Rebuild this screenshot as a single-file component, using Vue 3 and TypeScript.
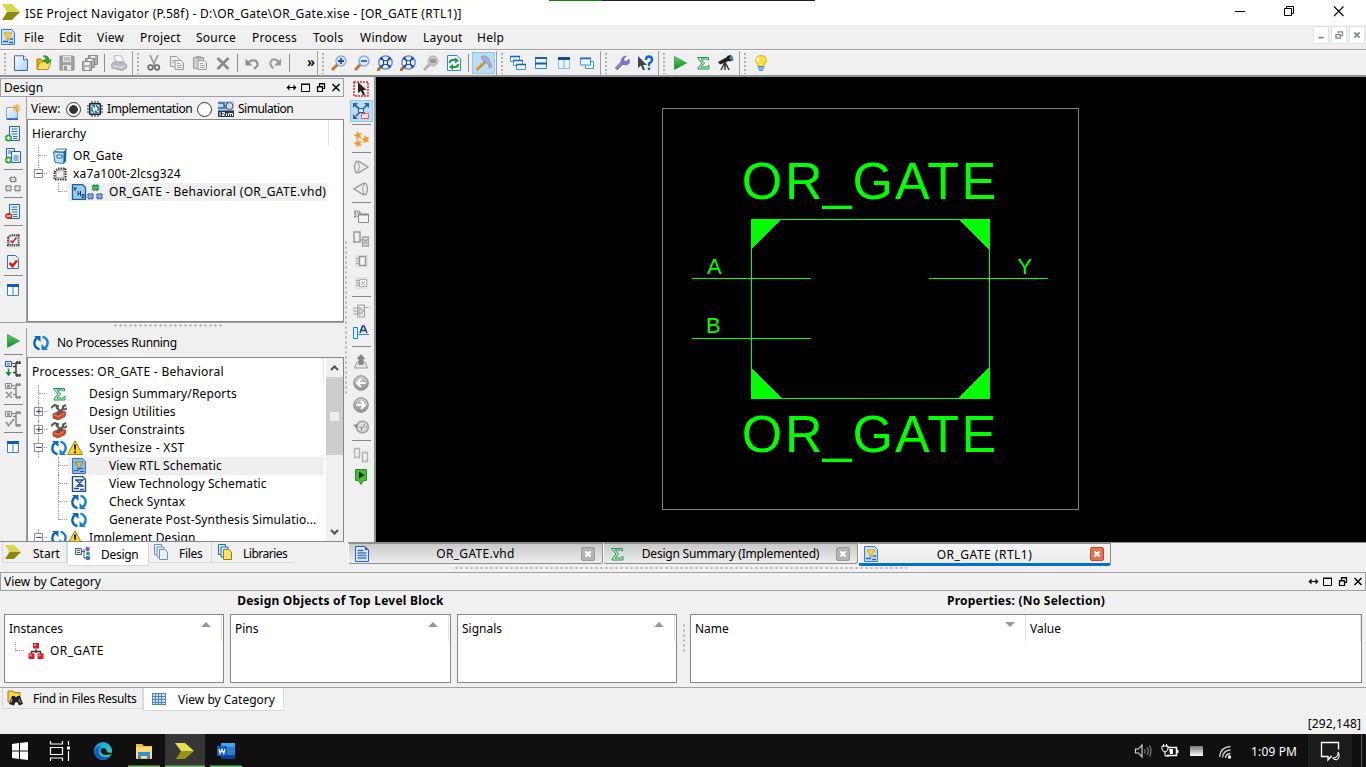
<script setup lang="ts">
interface Tool { icon: string; sep?: boolean; active?: boolean }
interface Row { icon: string; icon2?: string; label: string; level: number; box?: string; selected?: boolean; wide?: boolean }

const menus: string[] = ['File', 'Edit', 'View', 'Project', 'Source', 'Process', 'Tools', 'Window', 'Layout', 'Help']

const t = (names: string): Tool[] =>
  names.split(' ').map((n) => (n === '|' ? { icon: '', sep: true } : { icon: n.replace('*', ''), active: n.startsWith('*') }))

const toolGroups: { id: string; items: Tool[] }[] = [
  { id: 'g1', items: t('new open save saveall | print') },
  { id: 'g2', items: t('cut copy paste delete | undo redo |') },
  { id: 'g3', items: t('zoomin zoomout zoomfit zoomfit zoomoff refresh | *hammer') },
  { id: 'g4', items: t('cascade tileh tilev float') },
  { id: 'g5', items: t('wrench whats') },
  { id: 'g6', items: t('play sigma scope') },
  { id: 'g7', items: t('bulb') },
]
const designTools = t('newsrc addsrc addcopy | modules | removesrc | chipcheck doccheck | layout')
const processTools = t('play | run1 run2 | run3 | layout')
const schematicTools = t('select *zoombox | stars | coneout conein | blk1 blk2 blk3 blk4 | gate netname | up back fwd hist | pair marker')

const rows: Row[] = [
  { icon: 'sigma', label: 'Design Summary/Reports', level: 0 },
  { icon: 'tools', label: 'Design Utilities', level: 0, box: '+' },
  { icon: 'tools', label: 'User Constraints', level: 0, box: '+' },
  { icon: 'cycle', icon2: 'warn', label: 'Synthesize - XST', level: 0, box: '-', wide: true },
  { icon: 'rtl', label: 'View RTL Schematic', level: 1, selected: true },
  { icon: 'tech', label: 'View Technology Schematic', level: 1 },
  { icon: 'cycle', label: 'Check Syntax', level: 1 },
  { icon: 'cycle', label: 'Generate Post-Synthesis Simulatio...', level: 1 },
  { icon: 'cycle', icon2: 'warn', label: 'Implement Design', level: 0, box: '-' },
]
</script>

<template>
  <div class="app">
    <svg width="0" height="0" class="sprite">
      <defs>
        <linearGradient id="gb" x1="0" y1="0" x2="1" y2="1"><stop offset="0" stop-color="#fff" /><stop offset="1" stop-color="#a9cdf5" /></linearGradient>
        <linearGradient id="gg" x1="0" y1="0" x2="0" y2="1"><stop offset="0" stop-color="#58d06a" /><stop offset="1" stop-color="#0a8a20" /></linearGradient>
        <linearGradient id="ge" x1="0" y1="0" x2="1" y2="1"><stop offset="0" stop-color="#1b8fe0" /><stop offset=".5" stop-color="#27b8d8" /><stop offset="1" stop-color="#5fd66b" /></linearGradient>
        <linearGradient id="gk" x1="0" y1="0" x2="0" y2="1"><stop offset="0" stop-color="#777" /><stop offset="1" stop-color="#fff" /></linearGradient>
        <linearGradient id="gc" x1="0" y1="0" x2="0" y2="1"><stop offset="0" stop-color="#d0d0d0" /><stop offset="1" stop-color="#8f8f8f" /></linearGradient>
      </defs>
      <symbol id="i-ise" viewBox="0 0 18 16"><path d="M0 0h10l8 8H5z" fill="#d5d84c" /><path d="M5 8h13l-8 8H0z" fill="#8b8a0c" /></symbol>
      <symbol id="i-new" viewBox="0 0 16 16"><path d="M1.500 .8h9l4 4v10.700h-13z" fill="url(#gb)" stroke="#3c66b8" /><path d="M10.500.800v4h4" fill="#fff" stroke="#3c66b8" /></symbol>
      <symbol id="i-open" viewBox="0 0 16 16"><path d="M1 14V4h4l1 1.500h5V14z" fill="#e8b420" stroke="#b07c10" /><path d="M1 14.500L4 7h11l-3 7.500z" fill="#ffdf62" stroke="#c08d18" /><path d="M7 1c4-1 6 1 6 4h2.500l-4 4-4-4H10c0-2-1-3-3-4z" fill="#25a834" stroke="#0b7820" stroke-width=".6" /></symbol>
      <symbol id="i-save" viewBox="0 0 16 16"><path d="M1 1h13l1 1v13H1z" fill="#a2a2a2" stroke="#8a8a8a" /><path d="M4 1h8v6H4zM4 10h8v5H4z" fill="#e6e6e6" /><path d="M5 3h6M5 5h6" stroke="#999" /><path d="M5 11h3v4H5z" fill="#999" /></symbol>
      <symbol id="i-saveall" viewBox="0 0 16 16"><g stroke="#8a8a8a" fill="#b2b2b2"><path d="M6.500.5h9v9h-9z" /><path d="M3.500 3.500h9v9h-9z" /><path d="M.5 6.500h9v9h-9z" /></g><path d="M2.500 7h5v3h-5zM3 12h4v3H3zM6 4h4v2H6zM9 1h4v2H9z" fill="#eee" /></symbol>
      <symbol id="i-print" viewBox="0 0 16 16"><path d="M3 1l6-1 4 6-8 2z" fill="#f6f6f6" stroke="#aaa" stroke-width=".8" /><path d="M.5 9L4 6.500l9 1 2.500 2V13L11 15.500 1 13z" fill="#b9bcc4" stroke="#989aa2" stroke-width=".8" /><path d="M2 11l9 1.500 3-2" stroke="#e9e9ef" fill="none" /></symbol>
      <symbol id="i-cut" viewBox="0 0 16 16"><path d="M4 0l5 11M12 0L7 11" stroke="#999" stroke-width="1.700" /><circle cx="4.500" cy="12.500" r="2.300" fill="none" stroke="#6d6d6d" stroke-width="1.700" /><circle cx="11" cy="12.500" r="2.300" fill="none" stroke="#6d6d6d" stroke-width="1.700" /></symbol>
      <symbol id="i-copy" viewBox="0 0 16 16"><g fill="#eee" stroke="#9a9a9a"><path d="M1.500 1.500h6l3 3v7h-9z" /><path d="M6 5.500h6l2.500 2.500v6.500H6z" /></g><path d="M8 8.500h3M8 10.500h5M8 12.500h5M3 5.500h3M3 7.500h3" stroke="#aaa" /></symbol>
      <symbol id="i-paste" viewBox="0 0 16 16"><path d="M1.500 2.500h10v11h-10z" fill="#d0d0d0" stroke="#9a9a9a" /><path d="M4 1h5v3H4z" fill="#aaa" /><path d="M6 5.500h6l2.500 2.500v6.500H6z" fill="#f0f0f0" stroke="#9a9a9a" /><path d="M8 8.500h3M8 10.500h5M8 12.500h5" stroke="#aaa" /></symbol>
      <symbol id="i-delete" viewBox="0 0 16 16"><path d="M2.500 3l11 11M13.500 3l-11 11" stroke="#8b8b8b" stroke-width="2.800" /></symbol>
      <symbol id="i-undo" viewBox="0 0 16 16"><path d="M4 8l3-2.500h4q3 1 2.500 5L10 14" fill="none" stroke="#8f8f8f" stroke-width="2.200" /><path d="M1.500 3.500v7h7z" fill="#8f8f8f" /></symbol>
      <symbol id="i-redo" viewBox="0 0 16 16"><path d="M12 8Q9 3 5 5q-4 4 1.500 8.500" fill="none" stroke="#a0a0a0" stroke-width="2.200" /><path d="M14 3.500v7H7z" fill="#9a9a9a" /></symbol>
      <symbol id="i-zoomin" viewBox="0 0 16 16"><path d="M1 15l6-6" stroke="#c07824" stroke-width="3" /><circle cx="10" cy="6" r="5" fill="#dcebfb" stroke="#8aa8e3" stroke-width="1.400" /><path d="M7 6h6M10 3v6" stroke="#1d4db0" stroke-width="1.800" /></symbol>
      <symbol id="i-zoomout" viewBox="0 0 16 16"><path d="M1 15l6-6" stroke="#c07824" stroke-width="3" /><circle cx="10" cy="6" r="5" fill="#dcebfb" stroke="#8aa8e3" stroke-width="1.400" /><path d="M7 6h6" stroke="#2e62c4" stroke-width="1.800" /></symbol>
      <symbol id="i-zoomfit" viewBox="0 0 16 16"><path d="M0 16l4-4" stroke="#c86a1c" stroke-width="3" /><circle cx="8.500" cy="7.500" r="6.700" fill="#e4effd" stroke="#5a80d4" stroke-width="1.300" /><path d="M4.500 3.500l8 8M12.500 3.500l-8 8" stroke="#123f93" stroke-width="1.600" /><path d="M3.500 2.500h3l-3 3zM13.500 2.500h-3l3 3zM3.500 12.500h3l-3-3zM13.500 12.500h-3l3-3z" fill="#123f93" /><path d="M6.500 5.800h4v3.500h-4z" fill="#fff" stroke="#123f93" /></symbol>
      <symbol id="i-zoomoff" viewBox="0 0 16 16"><path d="M1 15l6-6" stroke="#b0b0b0" stroke-width="2.600" /><circle cx="10" cy="6" r="5" fill="#c6c6c6" stroke="#b0b0b0" /><path d="M7 4h6v4H7z" fill="#979797" /></symbol>
      <symbol id="i-refresh" viewBox="0 0 16 16"><path d="M1.500.5h9.500l3.500 3.500v11.500h-13z" fill="#eef6ff" stroke="#3b82cc" /><path d="M3.500 8q1-4 6-3" fill="none" stroke="#1d9b31" stroke-width="2" /><path d="M9 2.500l4 3-4 3z" fill="#1d9b31" /><path d="M12.500 9q-1 4-6 3" fill="none" stroke="#1d9b31" stroke-width="2" /><path d="M7 9l-4 3 4 3z" fill="#1d9b31" /></symbol>
      <symbol id="i-hammer" viewBox="0 0 16 16"><path d="M0 15l9-8" stroke="#c98c14" stroke-width="3" /><path d="M0 14l8-7" stroke="#f4c440" stroke-width="1" /><path d="M5 2q5-3 8 2l3 8-2.500 1L11 7 9 8 7 5z" fill="#a9aed8" stroke="#7b82b4" stroke-width=".6" /></symbol>
      <symbol id="i-cascade" viewBox="0 0 16 16"><g fill="#e9f5ff" stroke="#3d98d3"><path d="M.5 1.500h9v5h-9z" /><path d="M3.500 5.500h9v5h-9z" /><path d="M6.500 9.500h9v5h-9z" /></g><path d="M0 1.500h10M3 5.500h10M6 9.500h10" stroke="#2063b0" stroke-width="1.600" /></symbol>
      <symbol id="i-tileh" viewBox="0 0 16 16"><path d="M2.500 2.500h11v11h-11z" fill="#e9f5ff" stroke="#2a8ed2" /><path d="M2 3h12M2 8.500h12" stroke="#1b5cae" stroke-width="2" /></symbol>
      <symbol id="i-tilev" viewBox="0 0 16 16"><path d="M2.500 2.500h11v11h-11z" fill="#e9f5ff" stroke="#92bfe6" /><path d="M8 3v11" stroke="#70aee0" /><path d="M2 3.500h12" stroke="#174b98" stroke-width="3" /></symbol>
      <symbol id="i-layout" viewBox="0 0 16 16"><path d="M2.500 2.500h11v11h-11z" fill="#fff" stroke="#3a83cd" /><path d="M8 3v11" stroke="#3a83cd" /><path d="M2 3.500h12" stroke="#135ab5" stroke-width="3" /></symbol>
      <symbol id="i-float" viewBox="0 0 16 16"><g fill="#eaf6ff" stroke="#3499dc"><path d="M6.500 6.500h8v7h-8z" /><path d="M1.500 3h10v7h-10z" /></g><path d="M1 3.500h11" stroke="#1c67bb" stroke-width="1.500" /></symbol>
      <symbol id="i-wrench" viewBox="0 0 16 16"><path d="M2 14l7-7" stroke="#7169c4" stroke-width="3.400" /><path d="M12.500 1L10 3.500v2.800l2.500.2L15 4q2 5-3 6-5 0-5-4 1-5 5.500-5z" fill="#7b74cc" stroke="#5750a6" stroke-width=".5" /><path d="M2.500 13l5.500-5.500" stroke="#b9b4f0" /></symbol>
      <symbol id="i-whats" viewBox="0 0 16 16"><path d="M1 1v12l3-2.500 2 5 2-1-2-4.500h4z" fill="#444" /><path d="M9 5q0-3.500 3-3.500T15 5q0 2-3 3.500V11" fill="none" stroke="#1468c8" stroke-width="2.400" /><path d="M10.800 12.500h2.400v2.500h-2.400z" fill="#1468c8" /></symbol>
      <symbol id="i-play" viewBox="0 0 16 16"><path d="M2.500 1.500L14.500 8l-12 6.500z" fill="url(#gg)" stroke="#199a30" stroke-width=".7" /></symbol>
      <symbol id="i-sigma" viewBox="0 0 16 16"><path d="M2.500 2.500h11V5h-1l-1-1H6l3.500 4L6 12h6l1-1.500h1V14h-11v-1l4-5-4-4.500z" fill="#bff0cb" stroke="#22964b" /></symbol>
      <symbol id="i-scope" viewBox="0 0 16 16"><path d="M0 7l10-5.500 2 4L2 9.500z" fill="#222" /><path d="M9 1l4-1 2.500 5-4 1.500z" fill="#111" /><circle cx="13.300" cy="3" r="2" fill="#3392c8" /><path d="M7 7l-4 8M7 7v8M7 7l4 8" stroke="#333" stroke-width="1.500" /></symbol>
      <symbol id="i-bulb" viewBox="0 0 16 16"><path d="M8 .7c-7 0-6 7-3 8.800V12h6V9.500c3-1.800 4-8.800-3-8.800z" fill="#ffe13a" stroke="#d29b20" stroke-width=".9" /><path d="M6 2.500q-3 1.500-1 4" stroke="#fffbd0" stroke-width="2" fill="none" /><path d="M5.500 11.500h5l-1 4h-3z" fill="#7abdf0" stroke="#2e82cf" stroke-width=".8" /></symbol>
      <symbol id="i-newsrc" viewBox="0 0 16 16"><path d="M1.500 3.500h11v12h-11z" fill="url(#gb)" stroke="#7fa4d0" /><path d="M2 15h11" stroke="#1f5aa5" stroke-width="1.500" /><path d="M11.500 0v8M7.500 4h8M8.500 1l6 6M14.500 1l-6 6" stroke="#f0ac3c" stroke-width="1.200" /></symbol>
      <symbol id="i-addsrc" viewBox="0 0 16 16"><path d="M4.500.5h10v14h-10z" fill="#e8f3ff" stroke="#2662b4" /><path d="M6.500 3h6M6.500 5.500h6M6.500 8h6M8 10.500h4.500M8 12.500h4.500" stroke="#2f73c4" /><circle cx="3.500" cy="12" r="3.500" fill="#27a33a" /><path d="M1.500 12h4M3.500 10v4" stroke="#fff" stroke-width="1.300" /></symbol>
      <symbol id="i-addcopy" viewBox="0 0 16 16"><path d="M1.500.5h8v12h-8z" fill="#e8f3ff" stroke="#2662b4" /><path d="M6.500 3.500h9v11h-9z" fill="#e8f3ff" stroke="#2662b4" /><path d="M8.500 8h5M8.500 10h5M8.500 12h5M3 3h3M3 5h3" stroke="#2f73c4" /><circle cx="3.500" cy="12" r="3.500" fill="#27a33a" /><path d="M1.500 12h4M3.500 10v4" stroke="#fff" stroke-width="1.300" /></symbol>
      <symbol id="i-removesrc" viewBox="0 0 16 16"><path d="M4.500.5h10v14h-10z" fill="#e8f3ff" stroke="#2662b4" /><path d="M6.500 3h6M6.500 5.500h6M6.500 8h6M8 10.500h4.500M8 12.500h4.500" stroke="#2f73c4" /><ellipse cx="3.700" cy="12" rx="3.700" ry="3" fill="#dc2418" /><path d="M1.500 12h4.500" stroke="#fff" stroke-width="1.500" /></symbol>
      <symbol id="i-modules" viewBox="0 0 16 16"><path d="M4 2.500h8M4 4.500h8M6.500 0v7M9.500 0v7M0 10.500h7M0 13.500h7M2 9v7M5 9v7M9 10.500h7M9 13.500h7M11 9v7M14 9v7" stroke="#999" /><g fill="#ddd" stroke="#858585"><path d="M5.500 1.500h5v4h-5zM1 10h5v4.500H1zM10 10h5v4.500h-5z" /></g></symbol>
      <symbol id="i-hier" viewBox="0 0 16 16"><path d="M4.500 2h8M4.500 5h8M7 0v7M10 0v7" stroke="#2ba05a" /><path d="M6 1.500h5v4.500H6z" fill="#4bb673" stroke="#118a42" /><path d="M0 10.500h7M0 13.500h7M2 9v7M5 9v7M9 10.500h7M9 13.500h7M11 9v7M14 9v7" stroke="#6d84c6" /><path d="M1 10h5v4.500H1zM10 10h5v4.500h-5z" fill="#8fa3dc" stroke="#4d67b2" /></symbol>
      <symbol id="i-chipcheck" viewBox="0 0 16 16"><path d="M3.500 6L6 3.500h7v9.500h-9.500z" fill="#f5f5f5" stroke="#444" stroke-width="3" stroke-dasharray="1.200 .9" /><path d="M4 6l2-2h7v8.500H4z" fill="#f5f5f5" stroke="#777" stroke-width=".8" /><path d="M5.500 8.500l2 2 4-5" fill="none" stroke="#e01e14" stroke-width="1.600" /></symbol>
      <symbol id="i-doccheck" viewBox="0 0 16 16"><path d="M2.500 1.500h8l3 3v10h-11z" fill="#e8f1fc" stroke="#3c6cba" /><path d="M4.500 9l3 3L12 6.500" fill="none" stroke="#e01e14" stroke-width="2.600" /></symbol>
      <symbol id="i-run1" viewBox="0 0 16 16"><path d="M.5.500h6v5h-6zM7 2.500h3" fill="#e5efff" stroke="#2a57a6" /><path d="M2 2.500h3M2 4h3" stroke="#2a57a6" stroke-width=".7" /><path d="M3.500 7.500v5" stroke="#17902d" stroke-width="1.500" /><path d="M.5 11h6l-3 4.500z" fill="#17902d" /><path d="M16 2h-5v12h5M8 5.500h3M8 11.500h3M12 0v3M14.500 0v3M12 13v3M14.500 13v3" fill="none" stroke="#3d3d3d" stroke-width="1.500" /></symbol>
      <symbol id="i-run2" viewBox="0 0 16 16"><path d="M.5.500h6v5h-6zM7 2.500h3" fill="#eee" stroke="#888" /><path d="M2 2.500h3M2 4h3M1 9l6 6M7 9l-6 6" stroke="#929292" stroke-width="1.600" /><path d="M16 2h-5v12h5M8 5.500h3M8 11.500h3M12 0v3M14.500 0v3M12 13v3M14.500 13v3" fill="none" stroke="#888" stroke-width="1.500" /></symbol>
      <symbol id="i-run3" viewBox="0 0 16 16"><path d="M.5.500h6v5h-6zM7 2.500h3" fill="#eee" stroke="#888" /><path d="M2 2.500h3M2 4h3M1 11l2.500 3.500L9 8" stroke="#929292" fill="none" stroke-width="1.700" /><path d="M16 2h-5v12h5M8 5.500h3M12 0v3M14.500 0v3M12 13v3M14.500 13v3" fill="none" stroke="#888" stroke-width="1.500" /></symbol>
      <symbol id="i-cycle" viewBox="0 0 16 16"><path d="M6.500 14.500Q.5 12 1.500 7 2 4 4 3.500" fill="none" stroke="#0a68b4" stroke-width="2.400" /><path d="M1 1h6.500v6z" fill="#0a68b4" /><path d="M9.500 1.500Q15.500 4 14.500 9q-.5 3-2.500 3.500" fill="none" stroke="#1583cc" stroke-width="2.400" /><path d="M15 15H8.500V9z" fill="#1583cc" /></symbol>
      <symbol id="i-warn" viewBox="0 0 16 16"><path d="M8 .8L15.500 14.500H.5z" fill="#ffd22e" stroke="#a98310" stroke-linejoin="round" /><path d="M7 4.500h2.200L8.700 10H7.500zM7.200 11.200h1.800v2H7.200z" fill="#111" /></symbol>
      <symbol id="i-tools" viewBox="0 0 16 16"><path d="M2 10l8-4 5 2.500-1 4-7 3.500L2 14z" fill="#cf4a2b" stroke="#9a2c18" stroke-width=".7" /><path d="M3 11l5 1.500 5-3" stroke="#f08a68" fill="none" /><path d="M0 4l3.500-3L8 2.500M5 3l6 6M15 1l-3 1.500V5l2 .5L16 4M12 4.500L6 11" fill="none" stroke="#555" stroke-width="2" /></symbol>
      <symbol id="i-rtl" viewBox="0 0 16 16"><path d="M1.500.5h10l3 3v12h-13z" fill="#8dbae4" stroke="#3674ba" /><path d="M4 4h8L9 8.500V11H7V8.500z" fill="#c9c27a" stroke="#8a8a46" /><path d="M3 12.500h5M6 10.500h6M9 13.500h4" stroke="#1e5aa2" /></symbol>
      <symbol id="i-rtl2" viewBox="0 0 16 16"><path d="M1.500.5h10l3 3v12h-13z" fill="#c6e0fa" stroke="#3a7bcb" /><path d="M4 4h8L9 8v3H7V8z" fill="#ffd83a" stroke="#d19e14" /><path d="M3 12.500h5M10 10h3M9 13.500h4" stroke="#1d69c2" stroke-width="1.500" /></symbol>
      <symbol id="i-tech" viewBox="0 0 16 16"><path d="M1.500.5h10l3 3v12h-13z" fill="#fff" stroke="#20488e" stroke-width="1.400" /><path d="M4 4h8L6 10h6L5 4" fill="none" stroke="#20488e" stroke-width="1.300" /><path d="M3 12.500h5M9 13.500h4" stroke="#20488e" stroke-width="1.500" /></symbol>
      <symbol id="i-proj" viewBox="0 0 16 16"><path d="M2 3.500L5 1h9.500l-2 3z" fill="#fff" stroke="#357fba" /><path d="M11.500 4L14.500.5 14 13l-2 2.500z" fill="#145f9c" /><path d="M1.500 4l10.500.5-.5 11-8.500-1z" fill="#b9def8" stroke="#2479ba" /><path d="M5 7h5v3H5z" fill="#fff" stroke="#2b5d96" /></symbol>
      <symbol id="i-chip" viewBox="0 0 16 16"><path d="M2.500 6L6 2.500h7.500v11h-11z" fill="#fff" stroke="#333" stroke-width="2" stroke-dasharray="1.500 1" /><path d="M4 6.500L6.500 4H12v8H4z" fill="#eee" stroke="#777" stroke-width=".8" /></symbol>
      <symbol id="i-vhd" viewBox="0 0 16 16"><path d="M1.500.5h10l3 3v12h-13z" fill="#9dcef2" stroke="#17629e" stroke-width="1.300" /><path d="M3 3l1 3.500L5.500 3M7 7v5M9.500 7v5M7 9.500h2.500M11 10.500h2v3H11z" fill="none" stroke="#123d68" /></symbol>
      <symbol id="i-impl" viewBox="0 0 16 16"><path d="M2.500 2.500h11v11h-11z" fill="#222" stroke="#222" /><path d="M5 0v16M8 0v16M11 0v16M0 5h16M0 8h16M0 11h16" stroke="#222" /><path d="M3.500 3.500h9v9h-9z" fill="#dcefff" /><path d="M7 11.500Q4 10 5 6M9 4.500q3 1.500 2 5.500" fill="none" stroke="#1673b8" stroke-width="1.500" /><path d="M4 4h4v3zM12 12H8V9z" fill="#1673b8" /></symbol>
      <symbol id="i-isim" viewBox="0 0 16 16"><path d="M0 0h16v16H0z" fill="#b9d6ef" /><path d="M0 2h6v3h3V1M0 7h8" stroke="#1968b0" fill="none" stroke-width="1.600" /><circle cx="11.500" cy="5" r="3.500" fill="#d5d8dd" stroke="#555" /><path d="M0 9.500h16V16H0z" fill="#27384f" /><path d="M2 11v4M4 11.500h2.500v1.500H4.500v1.500h2M8.500 12.500V15M10.500 15v-2.500h4V15M12.500 12.500V15" stroke="#fff" fill="none" /></symbol>
      <symbol id="i-red" viewBox="0 0 16 16"><path d="M8 6v4M3.500 11V8.500h9V11" stroke="#333" fill="none" stroke-width="1.300" /><path d="M5 0h6v5.500H5zM.5 10.200h6v5.800h-6zM9.500 10.200h6v5.800h-6z" fill="#dc1f22" /><path d="M6 1h2v2H6zM1.500 11.200h2v2h-2zM10.500 11.200h2v2h-2z" fill="#ff8d84" /></symbol>
      <symbol id="i-find" viewBox="0 0 16 16"><path d="M1 1h5l1 1.500h6V12H1z" fill="#f6d341" stroke="#a57f12" /><path d="M2 14l3-8h3v1h2V6h3l3 8-4 1.500-1.500-3.500h-2L7 15.500z" fill="#222" /><path d="M5 9l-1 4M12 9l1.500 4" stroke="#aaa" /></symbol>
      <symbol id="i-grid" viewBox="0 0 16 16"><path d="M1 2h14v12H1z" fill="#4a82c8" /><path d="M2 3h2v2H2zM5 3h2v2H5zM8 3h2v2H8zM11 3h3v2h-3zM2 6h2v2H2zM5 6h2v2H5zM8 6h2v2H8zM11 6h3v2h-3zM2 9h2v2H2zM5 9h2v2H5zM8 9h2v2H8zM11 9h3v2h-3zM2 12h2v1H2zM5 12h2v1H5zM8 12h2v1H8zM11 12h3v1h-3z" fill="#cfe4fb" /></symbol>
      <symbol id="i-dtab" viewBox="0 0 16 16"><path d="M.5 2.500h6v6h-6z" fill="#eaf2fc" stroke="#31579c" /><path d="M2 4.500h3M2 6.500h3M7 5.500h3M9 3v9h2" stroke="#31579c" fill="none" /><circle cx="12.500" cy="3" r="2.200" fill="#8a55b5" /><circle cx="13" cy="7.500" r="2" fill="#3ba362" /><circle cx="13" cy="12" r="2.300" fill="#4172c2" /></symbol>
      <symbol id="i-files" viewBox="0 0 16 16"><g fill="#eaf2ff" stroke="#6d8fc9"><path d="M1.500.5h7v10h-7z" /><path d="M4 3h7v10H4z" /><path d="M6.500 5.500h5l3 2.500v7.500h-8z" /></g></symbol>
      <symbol id="i-libs" viewBox="0 0 16 16"><g stroke="#1b6caf"><path d="M1.500.5h7v10h-7z" fill="#d9edff" /><path d="M4 3h7v10H4z" fill="#d9edff" /><path d="M6.500 5.500h5l3 2.500v7.500h-8z" fill="#ffe468" stroke="#937a1c" /></g></symbol>
      <symbol id="i-doc" viewBox="0 0 16 16"><path d="M1.500.5H11l3.500 3.500v11.500h-13z" fill="#d7e9fe" stroke="#2b62b8" /><path d="M3.500 4.500h6M3.500 7h9M3.500 9.500h9M3.500 12h9" stroke="#3f76c8" stroke-width="1.300" /><path d="M11 .5v3.500h3.500z" fill="#2559ac" /></symbol>
      <symbol id="i-select" viewBox="0 0 16 16"><path d="M1 1h14v14H1z" fill="none" stroke="#f02020" stroke-width="1.500" stroke-dasharray="2 1" /><path d="M5 1v11l3-2 2 4.500 2-1L10 9h3.500z" fill="#222" /></symbol>
      <symbol id="i-zoombox" viewBox="0 0 16 16"><path d="M2 2l11 10M14 2L3 13" stroke="#2562a8" stroke-width="1.700" /><path d="M0 0h5L0 5zM16 0h-5l5 5zM0 16h5l-5-5z" fill="#2562a8" /><path d="M5.500 5.500h5v4h-5z" fill="#cfe5fb" stroke="#2562a8" /><path d="M8.500 10.500h7v5h-7z" fill="#fbdcdc" stroke="#ec2020" stroke-dasharray="2 1" /></symbol>
      <symbol id="i-stars" viewBox="0 0 16 16"><g fill="#f79a28" stroke="#f08a20" stroke-width=".5"><path d="M4.500.5l1.200 2.200 2.800-.4-1.500 2.200 1 2.500-2.500-.8-2.200 1.800.1-2.800L1 4l2.600-.6z" /><path d="M4.500 8.500l1.200 2.200 2.800-.4-1.500 2.200 1 2.500-2.500-.8-2.200 1.800.1-2.800L1 12l2.600-.6z" /><path d="M12 4.500l1.200 2.200 2.800-.4-1.500 2.200 1 2.500-2.500-.8-2.200 1.800.1-2.800L8.500 8l2.600-.6z" /></g></symbol>
      <symbol id="i-coneout" viewBox="0 0 16 16"><path d="M3 2.500q-3 5.500 0 11h3l9-5.500-9-5.500z" fill="#ececec" stroke="#9b9b9b" stroke-width="1.300" /><path d="M5 3q3 5 0 10" fill="none" stroke="#9b9b9b" /></symbol>
      <symbol id="i-conein" viewBox="0 0 16 16"><path d="M13 2.500q3 5.500 0 11h-3L1 8l9-5.500z" fill="#ececec" stroke="#9b9b9b" stroke-width="1.300" /><path d="M11 3q-3 5 0 10" fill="none" stroke="#9b9b9b" /></symbol>
      <symbol id="i-blk1" viewBox="0 0 16 16"><path d="M2 2.500h5v5H2z" fill="#ddd" stroke="#888" stroke-width="2" stroke-dasharray="1 .8" /><path d="M5.500 5.500h10v8h-10z" fill="#f3f3f3" stroke="#8c8c8c" /><path d="M5 5.500h11" stroke="#8c8c8c" stroke-width="2" /></symbol>
      <symbol id="i-blk2" viewBox="0 0 16 16"><path d="M1 1h6v10H1z" fill="#eee" stroke="#999" stroke-width="1.500" /><path d="M9.500 6h6v9h-6zM10.500 8l4 5M14.500 8l-4 5M7 9h3" fill="#ddd" stroke="#a5a5a5" stroke-width="1.300" /></symbol>
      <symbol id="i-blk3" viewBox="0 0 16 16"><path d="M2 2h13v12H2z" fill="#e3e3e3" /><path d="M6.500 3.500h6v9h-6z" fill="#f6f6f6" stroke="#999" stroke-width="1.500" /><path d="M3 5.500h3M3 8h3M3 10.500h3" stroke="#aaa" /></symbol>
      <symbol id="i-blk4" viewBox="0 0 16 16"><path d="M2 2h13v12H2z" fill="#e3e3e3" /><path d="M6.500 4.500h7v7h-7zM8 6l4 4M12 6l-4 4M3 5.500h3M3 8h3M3 10.500h3" fill="#f6f6f6" stroke="#aaa" /></symbol>
      <symbol id="i-gate" viewBox="0 0 16 16"><path d="M4.500 2v12h7V2zM0 5h4M0 8h4M0 11h4M12 4.500h4" fill="#e8e8e8" stroke="#a0a0a0" /><path d="M6 4v8l5-4z" fill="#d6d6d6" stroke="#a0a0a0" /></symbol>
      <symbol id="i-netname" viewBox="0 0 16 16"><path d="M.5 2.500h4v11h-4z" fill="#dff1ff" stroke="#1a8ad8" /><path d="M5 9.500h11" stroke="#2395da" /><path d="M7 8l2.500-7h1.500L14 8M8 5.500h4" fill="none" stroke="#203d96" stroke-width="1.600" /></symbol>
      <symbol id="i-up" viewBox="0 0 16 16"><path d="M4 9l-2.500 6h13L12 9z" fill="#e8e8e8" stroke="#999" /><path d="M8 1l4.500 5h-2v6h-5V6h-2z" fill="#858585" /></symbol>
      <symbol id="i-back" viewBox="0 0 16 16"><circle cx="8" cy="8" r="7.300" fill="url(#gc)" stroke="#8a8a8a" /><path d="M12.500 8H4.500M8 4L4 8l4 4" fill="none" stroke="#fff" stroke-width="2" /></symbol>
      <symbol id="i-fwd" viewBox="0 0 16 16"><circle cx="8" cy="8" r="7.300" fill="url(#gc)" stroke="#8a8a8a" /><path d="M3.500 8h8M8 4l4 4-4 4" fill="none" stroke="#fff" stroke-width="2" /></symbol>
      <symbol id="i-hist" viewBox="0 0 16 16"><circle cx="9.500" cy="8" r="5.800" fill="#ddd" stroke="#a2a2a2" stroke-width="1.600" /><path d="M0 6l5-1-1 5z" fill="#8b8b8b" /><path d="M6.500 8l3 1 2-4M12 8h2M8.500 12V9" stroke="#888" fill="none" /></symbol>
      <symbol id="i-pair" viewBox="0 0 16 16"><path d="M1.500 1.500h5v9h-5zM9.500 5.500h5v9h-5z" fill="#eee" stroke="#b3b3b3" stroke-width="1.400" /></symbol>
      <symbol id="i-marker" viewBox="0 0 16 16"><path d="M2.500.5h11v11h-3L8 15.500l-2.500-4h-3z" fill="#48b73a" stroke="#2e8a24" /><path d="M6 2.500v7L11.500 6z" fill="#0d2f0b" /></symbol>
      <symbol id="i-dock" viewBox="0 0 60 14"><path d="M4 6.500h9" stroke="#000" /><path d="M6.500 3.500v6l-3-3zM10.500 3.500v6l3-3z" fill="#000" /><path d="M18.500 3.500h8v7h-8zM18 3h9" fill="none" stroke="#000" /><path d="M36.500 5V2.500h5v5H39M36 3h6M34.500 5.500h5v5h-5zM34 6h6" fill="none" stroke="#000" stroke-width="1.200" /><path d="M49.500 3l7 7M56.500 3l-7 7" stroke="#000" stroke-width="1.500" /></symbol>
      <symbol id="i-x" viewBox="0 0 14 14"><path d="M4 4l6 6M10 4l-6 6" stroke="#fff" stroke-width="2.400" /></symbol>
    </svg>

    <header class="titlebar">
      <svg class="logo"><use href="#i-ise" /></svg>
      <span class="title">ISE Project Navigator (P.58f) - D:\OR_Gate\OR_Gate.xise - [OR_GATE (RTL1)]</span>
      <i class="progress"></i>
      <svg class="winctl" width="130" height="25" viewBox="0 0 130 25"><g fill="none" stroke="#000"><path d="M1 11.500h10" /><path d="M50.500 8.500h7v7h-7zM52.500 8V6.500h7v7H58" /><path d="M100 6.500l9.500 9.500M109.500 6.500L100 16" stroke-width="1.100" /></g></svg>
    </header>

    <nav class="menubar">
      <svg class="ico"><use href="#i-rtl2" /></svg>
      <div class="menus"><span v-for="m in menus" :key="m">{{ m }}</span></div>
      <div class="mdi">
        <svg viewBox="0 0 16 18"><path d="M5 12h6" stroke="#7c8894" stroke-width="2" /></svg>
        <svg viewBox="0 0 16 18"><path d="M7 7V5.500h5v4h-1.500M4.500 8.500h5v4h-5z" stroke="#7c8894" stroke-width="1.500" fill="none" /></svg>
        <svg viewBox="0 0 16 18"><path d="M5 6l6 6M11 6l-6 6" stroke="#7c8894" stroke-width="2" /></svg>
      </div>
    </nav>

    <div class="toolbar">
      <div v-for="g in toolGroups" :key="g.id" :class="['group', g.id]">
        <i class="grip"></i>
        <template v-for="(b, i) in g.items" :key="i">
          <i v-if="b.sep" class="vsep"></i>
          <span v-else :class="['btn', { active: b.active }]"><svg class="ico"><use :href="'#i-' + b.icon" /></svg></span>
        </template>
        <span v-if="g.id === 'g2'" class="more">»</span>
      </div>
    </div>

    <main class="work">
      <section class="design">
        <div class="docktitle"><span>Design</span><svg class="dockctl"><use href="#i-dock" /></svg></div>
        <div class="upper">
          <div class="side">
            <template v-for="(b, i) in designTools" :key="i">
              <i v-if="b.sep" class="hsep"></i>
              <span v-else class="sbtn"><svg class="ico"><use :href="'#i-' + b.icon" /></svg></span>
            </template>
          </div>
          <div class="pane">
            <div class="viewrow">
              <span class="vlabel">View:</span><i class="radio on"></i>
              <svg class="ico"><use href="#i-impl" /></svg><span class="impl">Implementation</span>
              <i class="radio"></i><svg class="ico"><use href="#i-isim" /></svg><span class="sim">Simulation</span>
            </div>
            <div class="box tree">
              <div class="hdr">Hierarchy</div>
              <div class="row"><i class="branch"></i><svg class="ico"><use href="#i-proj" /></svg><span class="p1">OR_Gate</span></div>
              <div class="row"><i class="branch last"><b>−</b></i><svg class="ico"><use href="#i-chip" /></svg><span class="p2">xa7a100t-2lcsg324</span></div>
              <div class="row lvl1"><i class="branch last"></i><div class="sel"><svg class="ico"><use href="#i-vhd" /></svg><svg class="ico"><use href="#i-hier" /></svg><span class="p3">OR_GATE - Behavioral (OR_GATE.vhd)</span></div></div>
            </div>
          </div>
        </div>
        <div class="hsplit"><i></i></div>
        <div class="lower">
          <div class="side">
            <template v-for="(b, i) in processTools" :key="i">
              <i v-if="b.sep" class="hsep"></i>
              <span v-else class="sbtn"><svg class="ico"><use :href="'#i-' + b.icon" /></svg></span>
            </template>
          </div>
          <div class="pane">
            <div class="running"><svg class="ico"><use href="#i-cycle" /></svg><span>No Processes Running</span></div>
            <div class="box procs">
              <div class="plist">
                <div class="phdr">Processes: OR_GATE - Behavioral</div>
                <div v-for="r in rows" :key="r.label" :class="['row', { lvl1: r.level, deep: r.level }]">
                  <i :class="['branch', { last: r.label.startsWith('Gen') }]"><b v-if="r.box">{{ r.box === '-' ? '−' : '+' }}</b></i>
                  <div :class="['sel', { off: !r.selected }]">
                    <svg class="ico"><use :href="'#i-' + r.icon" /></svg>
                    <svg class="ico"><use v-if="r.icon2" :href="'#i-' + r.icon2" /></svg>
                    <span :class="['plabel', { wide: r.wide }]">{{ r.label }}</span>
                  </div>
                </div>
              </div>
              <div class="scroll">
                <svg class="up" viewBox="0 0 17 18"><path d="M5 11l3.500-3.500L12 11" fill="none" stroke="#505050" stroke-width="2" /></svg>
                <div class="thumb"><i></i></div>
                <svg class="down" viewBox="0 0 17 18"><path d="M5 7l3.500 3.500L12 7" fill="none" stroke="#505050" stroke-width="2" /></svg>
              </div>
            </div>
          </div>
        </div>
        <div class="ptabs">
          <div class="ptab t1"><svg class="ico"><use href="#i-ise" /></svg><span>Start</span></div>
          <div class="ptab t2 cur"><svg class="ico"><use href="#i-dtab" /></svg><span>Design</span></div>
          <div class="ptab t3"><svg class="ico"><use href="#i-files" /></svg><span>Files</span></div>
          <div class="ptab t4"><svg class="ico"><use href="#i-libs" /></svg><span>Libraries</span></div>
        </div>
      </section>

      <div class="vsplit"><i></i></div>

      <section class="editor">
        <div class="edrow">
          <div class="schem">
            <template v-for="(b, i) in schematicTools" :key="i">
              <i v-if="b.sep" class="hsep"></i>
              <span v-else :class="['sbtn', { active: b.active }]"><svg class="ico"><use :href="'#i-' + b.icon" /></svg></span>
            </template>
          </div>
          <svg class="canvas" viewBox="376 77 990 465" width="990" height="465">
            <rect x="662.500" y="108.500" width="416" height="401" fill="none" stroke="#808080" />
            <g fill="none" stroke="#0f0" shape-rendering="crispEdges">
              <rect x="751.500" y="219.500" width="238" height="179" />
              <path d="M692 278.500h119M692 338.500h119M929 278.500h119" />
            </g>
            <path d="M751 219h30l-30 31zM990 219h-32l32 32zM751 399v-32l31 32zM990 399v-33l-32.500 33z" fill="#0f0" shape-rendering="crispEdges" />
            <g class="big" fill="#0f0">
              <text x="741.800 784.900 822.800 852.500 895 927.300 961.500" y="199">OR_GATE</text>
              <text x="741.800 784.900 822.800 852.500 895 927.300 961.500" y="452">OR_GATE</text>
            </g>
            <g class="pin" fill="#0f0"><text x="707" y="274">A</text><text x="706" y="333">B</text><text x="1017.500" y="274">Y</text></g>
          </svg>
        </div>
        <div class="doctabs">
          <div class="dtab"><svg class="ico"><use href="#i-doc" /></svg><span class="d1">OR_GATE.vhd</span><svg class="close"><use href="#i-x" /></svg></div>
          <div class="dtab"><svg class="ico"><use href="#i-sigma" /></svg><span class="d2">Design Summary (Implemented)</span><svg class="close"><use href="#i-x" /></svg></div>
          <div class="dtab now"><svg class="ico"><use href="#i-rtl2" /></svg><span class="d3">OR_GATE (RTL1)</span><svg class="close red"><use href="#i-x" /></svg></div>
        </div>
      </section>
    </main>

    <div class="bsplit"><i></i></div>

    <section class="category">
      <div class="docktitle"><span class="vbc">View by Category</span><svg class="dockctl"><use href="#i-dock" /></svg></div>
      <div class="cols">
        <div class="objects">
          <h4 class="h1">Design Objects of Top Level Block</h4>
          <div class="lists">
            <div class="box list"><div class="lh"><span>Instances</span><i class="tri"></i></div>
              <div class="row inst"><i class="branch last"></i><svg class="ico"><use href="#i-red" /></svg><span>OR_GATE</span></div></div>
            <div class="box list mid"><div class="lh"><span>Pins</span><i class="tri"></i></div></div>
            <div class="box list"><div class="lh"><span>Signals</span><i class="tri"></i></div></div>
          </div>
        </div>
        <div class="csplit"><i></i></div>
        <div class="props">
          <h4 class="h2">Properties: (No Selection)</h4>
          <div class="box ptable"><div class="lh name"><span>Name</span><i class="tri dn"></i></div><div class="lh value"><span>Value</span></div></div>
        </div>
      </div>
      <div class="ctabs">
        <div class="ctab c1"><svg class="ico"><use href="#i-find" /></svg><span>Find in Files Results</span></div>
        <div class="ctab c2 cur"><svg class="ico"><use href="#i-grid" /></svg><span>View by Category</span></div>
      </div>
    </section>

    <div class="status"><span>[292,148]</span></div>

    <footer class="taskbar">
      <svg width="250" height="33" viewBox="0 734 250 33">
        <path d="M165 734h40v33h-40z" fill="#363636" />
        <path d="M12 744l7-1v7.500h-7zM20 743l8-1v8.500h-8zM12 751.500h7v7.500l-7-1zM20 751.500h8v8.500l-8-1z" fill="#fff" />
        <path d="M50.500 741v3h12v-3M50.500 747.500h12v7h-12zM50.500 761v-3h12v3M68.500 741v4M68.500 751v10" fill="none" stroke="#fff" stroke-width="1.200" /><path d="M67 746.500h3v3h-3z" fill="#fff" />
        <circle cx="103" cy="751" r="9" fill="url(#ge)" /><path d="M94 751q2-5 7-4.500-3 2-2.500 6 1.500 5 8 4.500 3-.5 4.500-1.500-3 5-9 4.500-7-1-8-9z" fill="#1260b5" /><path d="M103 748q-3.500 1-2 4.500 2 3 7 2.500l3-1q1-1 .5-1.500-4 1-5-1.500 1-2-3.500-3z" fill="#101820" />
        <path d="M136 744h6l2 2h8v13h-16z" fill="#f6bd36" /><path d="M136 747h16v11h-16z" fill="#ffd976" /><path d="M138 752h12v7h-3v-3h-6v3h-3z" fill="#2e8fd6" />
        <path d="M175 743h10l9 8h-13z" fill="#e3df50" /><path d="M181 751h13l-9 8h-9z" fill="#97950f" />
        <path d="M221 743h14v16h-14z" fill="#2b7cd3" /><path d="M221 743h14v4h-14z" fill="#41a5ee" /><path d="M221 755h14v4h-14z" fill="#103f91" /><path d="M217 746h10v10h-10z" fill="#185abd" /><path d="M219 749l1.200 4.500 1.800-4 1.800 4 1.200-4.500" fill="none" stroke="#fff" stroke-width="1.200" />
        <path d="M128 766.500h32M165 766.500h40M210 766.500h32" stroke="#67bd67" stroke-width="2" />
      </svg>
      <div class="tray">
        <svg width="110" height="33" viewBox="1130 734 110 33">
          <g fill="none" stroke="#ddd" stroke-width="1.100"><path d="M1136.500 749h3l3.500-4v12l-3.500-4h-3z" /><path d="M1145.500 749q1.500 2 0 4.500M1148 747q2.500 4 0 8M1150.500 745.500q3 5.500 0 11" stroke="#888" /></g>
          <path d="M1168.500 747.500h9v8h-10" fill="none" stroke="#fff" stroke-width="1.600" /><path d="M1170 749h4v5h-3zM1178 750h1.500v3h-1.500z" fill="#fff" /><path d="M1163 746h6v3q-1 3-3 3t-3-3zM1164.500 744v3M1167.500 744v3M1166 751v5h4" stroke="#fff" fill="none" />
          <path d="M1191 746h13v10h-13z" fill="url(#gk)" />
          <g fill="none" stroke="#ccc" stroke-width="1.400"><path d="M1220.500 757q1-10 11-10.500M1223.500 757.500q.5-7 8-7.500M1226.500 758q0-4 5-4.500" /></g><circle cx="1230.500" cy="757" r="1.700" fill="#fff" />
        </svg>
        <span class="clock">1:09 PM</span>
        <div class="notif"><svg width="44" height="33" viewBox="1308 734 44 33"><path d="M1332 756.500h-1l-3 3.500v-3.500h-6.500v-14h17v7" fill="none" stroke="#fff" stroke-width="1.300" /><path d="M1338 752q1 5-5 6 4 4 6-1 .5-3-1-5z" fill="none" stroke="#fff" stroke-width="1.100" /></svg></div>
        <i class="peek"></i>
      </div>
    </footer>
  </div>
</template>

<style>
body { margin: 0; overflow: hidden; }
</style>

<style scoped>
* { box-sizing: border-box; }
.app { width: 1366px; height: 767px; display: flex; flex-direction: column; background: #f0f0f0; color: #000; font: 12px/18px "Noto Sans", "Open Sans", sans-serif; white-space: nowrap; overflow: hidden; }
.app span { flex: none; }
.sprite { position: absolute; }
i, h4 { font-style: normal; margin: 0; flex: none; }
.ico { width: 16px; height: 16px; flex: none; display: block; overflow: visible; }

.titlebar { height: 25px; flex: none; background: #fff; display: flex; align-items: center; position: relative; }
.logo { width: 18px; height: 16px; margin: 0 5px 1px 2px; }
.title { padding-top: 2px; letter-spacing: .275px; }
.progress { position: absolute; left: 549px; top: 0; width: 266px; height: 1px; background: linear-gradient(90deg, #108010 53px, #222 53px); }
.winctl { margin-left: auto; margin-right: 2px; }

.menubar { height: 25px; flex: none; display: flex; align-items: center; border-bottom: 1px solid #a0a0a0; }
.menubar .ico { margin-right: 8px; }
.menus { display: grid; grid-template-columns: 35px 38px 43px 56px 56px 61px 47px 63px 54px auto; letter-spacing: .25px; padding-top: 2px; }
.mdi { margin-left: auto; display: flex; gap: 2px; padding-right: 1px; margin-top: -4px; }
.mdi svg { width: 16px; height: 18px; background: #fff; border: 1px solid #e2e2e2; }

.toolbar { height: 27px; flex: none; display: flex; border-top: 1px solid #fff; border-bottom: 2px solid #8b9095; }
.group { height: 24px; display: flex; align-items: center; border-right: 1px solid #a0a0a0; }
.g1 { width: 133px; } .g2 { width: 185px; } .g3 { width: 179px; } .g4 { width: 104px; } .g5 { width: 58px; } .g6 { width: 81px; } .g7 { border: 0; }
.grip { width: 9px; height: 22px; background: radial-gradient(circle, #b2b2b2 1px, transparent 1.3px) 3px 0 / 4px 4px repeat-y; }
.btn { width: 23px; height: 22px; padding: 3px 0 0 4px; }
.active { background: #bcdcf4; outline: 1px solid #90c8f6; outline-offset: -1px; }
.vsep { width: 1px; height: 18px; background: #8d8d8d; margin: 0 2px 0 3px; }
.g3 .vsep { margin-right: 3px; }
.more { margin: -3px 0 0 15px; font-size: 14px; font-weight: 600; }

.work { height: 489px; flex: none; display: flex; }
.design { width: 344px; display: flex; flex-direction: column; flex: none; }
.docktitle { height: 19px; flex: none; margin-top: 1px; border: 1px solid #a0a0a0; display: flex; align-items: center; justify-content: space-between; padding-left: 3px; }
.dockctl { width: 60px; height: 14px; }
.upper { height: 226px; display: flex; flex: none; border-bottom: 1px solid #a0a0a0; }
.side { width: 27px; flex: none; display: flex; flex-direction: column; align-items: center; border-right: 1px solid #a0a0a0; padding-top: 4px; }
.upper .side { height: 225px; }
.sbtn { height: 22px; width: 21px; padding: 3px 2px 0 2px; }
.hsep { width: 19px; height: 1px; background: #858585; margin: 2px 0 3px; }
.pane { flex: 1; display: flex; flex-direction: column; min-width: 0; }
.viewrow { height: 22px; flex: none; display: flex; align-items: center; padding: 2px 0 0 4px; }
.vlabel { width: 31px; }
.radio { width: 15px; height: 15px; border: 1px solid #333; border-radius: 50%; background: #fff; }
.radio.on { background: radial-gradient(circle, #333 0 4px, #fff 4.600px); margin: 0 6px 0 4px; }
.viewrow .impl { margin: 0 4px; width: 86px; letter-spacing: -.42px; }
.viewrow .radio:not(.on) { margin-right: 6px; }
.viewrow .sim { margin-left: 4px; letter-spacing: -.5px; }
.box { background: #fff; border: 1px solid #828790; }
.tree { height: 204px; }
.hdr { height: 25px; padding: 5px 0 0 4px; width: 301px; border-right: 1px solid #e0e0e0; margin-bottom: 2px; }
.row { height: 18px; display: flex; align-items: center; }
.branch { width: 23px; height: 18px; position: relative; }
.branch::before { content: ""; position: absolute; left: 10px; top: 0; height: 18px; border-left: 1px dotted #999; }
.branch.last::before { height: 9px; }
.branch::after { content: ""; position: absolute; left: 11px; top: 8px; width: 8px; border-top: 1px dotted #999; }
.branch b { position: absolute; z-index: 1; left: 6px; top: 4px; width: 9px; height: 9px; border: 1px solid #919191; background: #fff; color: #2a4fa3; font: 700 9px/7px "DejaVu Sans", sans-serif; text-align: center; }
.tree .ico { margin-left: 1px; }
.p1, .p2 { margin-left: 5px; letter-spacing: .17px; }
.lvl1 { padding-left: 20px; }
.tree .sel { width: 259px; margin-left: -3px; }
.sel { height: 18px; display: flex; align-items: center; background: #efefef; flex: none; }
.sel.off { background: none; }
.tree .sel .ico { margin-left: 0; }
.tree .sel .ico:first-child { margin-left: 3px; }
.p3 { margin-left: 6px; letter-spacing: .32px; }
.hsplit { height: 5px; flex: none; display: flex; justify-content: center; }
.hsplit i { width: 109px; height: 3px; margin: 1px 10px 0 0; background: radial-gradient(circle, #b8b8b8 1px, transparent 1.300px) 0 0 / 5px 3px; }
.lower { height: 214px; flex: none; display: flex; border-bottom: 1px solid #828790; }
.lower .side { padding-top: 2px; }
.running { height: 29px; flex: none; display: flex; align-items: center; padding-left: 6px; gap: 8px; letter-spacing: -.31px; }
.procs { height: 185px; display: flex; justify-content: space-between; overflow: hidden; border-bottom: 0; }
.plist { width: 296px; overflow: hidden; }
.phdr { height: 25px; padding: 5px 0 0 4px; border-right: 1px solid #e0e0e0; margin-bottom: 2px; letter-spacing: .29px; }
.plist .sel { flex: 1; overflow: hidden; }
.plist .deep .sel { margin-left: -3px; padding-left: 3px; }
.plabel { margin-left: 6px; letter-spacing: .13px; }
.plabel.wide { letter-spacing: .33px; }
.scroll { width: 17px; background: #f0f0f0; display: flex; flex-direction: column; }
.scroll svg { width: 17px; height: 18px; flex: none; }
.scroll .up { margin-top: 1px; }
.thumb { height: 78px; background: #cdcdcd; display: flex; align-items: center; justify-content: center; }
.thumb i { width: 9px; height: 9px; background: #eee; }
.scroll .down { margin-top: auto; }
.ptabs { height: 24px; display: flex; padding-left: 2px; align-items: flex-start; letter-spacing: -.3px; }
.ptab { height: 21px; border: 1px solid #d9d9d9; border-width: 0 1px 1px; display: flex; align-items: center; }
.ptab span { padding-top: 3px; }
.t1 { width: 65px; padding-left: 2px; gap: 12px; letter-spacing: 0; }
.t2 { width: 82px; padding-left: 7px; gap: 10px; }
.t3 { width: 63px; padding-left: 4px; gap: 10px; border-left: 0; }
.t4 { width: 83px; padding-left: 5px; gap: 10px; border-width: 0 0 1px; letter-spacing: -.5px; }
.ptab.cur, .ctab.cur { background: #fff; height: 24px; }
.ptab.cur span { padding-top: 2px; }

.vsplit { width: 4px; display: flex; align-items: center; flex: none; }
.vsplit i { width: 4px; height: 156px; margin-bottom: 8px; background: radial-gradient(circle, #b8b8b8 1px, transparent 1.300px) 0 0 / 4px 5px; }
.editor { width: 1018px; flex: none; display: flex; flex-direction: column; }
.edrow { height: 465px; flex: none; display: flex; }
.schem { width: 28px; border-right: 2px solid #8b9095; display: flex; flex-direction: column; align-items: center; padding-top: 1px; flex: none; }
.schem .active { width: 23px; padding-left: 3px; }
.canvas { background: #000; display: block; }
.big { font: 52px "Liberation Sans", Arial, sans-serif; }
.pin { font: 22px "Liberation Sans", Arial, sans-serif; }
.doctabs { height: 24px; display: flex; border-top: 1px solid #8b9095; align-items: flex-start; }
.dtab { width: 255px; height: 21px; display: flex; align-items: center; padding: 0 7px 0 5px; border: 1px solid #8d8d8d; border-left-color: #fff; border-radius: 0 0 3px 3px; background: linear-gradient(#c9c9c9, #ededed); }
.app .dtab span { flex: 1; text-align: center; }
.d1 { letter-spacing: .28px; }
.d2 { letter-spacing: -.21px; }
.d3 { letter-spacing: .5px; }
.dtab.now { height: 23px; width: 253px; padding: 0 6px 0 4px; background: linear-gradient(#f5f5f5, #ececec); border-bottom: 3px solid #0070cc; }
.dtab.now span { padding-top: 3px; }
.close { width: 14px; height: 14px; background: #b4b4b4; border: 1px solid #999; border-radius: 2px; flex: none; }
.close.red { background: #e37450; border-color: #c9432d; }

.bsplit { height: 5px; flex: none; display: flex; justify-content: center; }
.bsplit i { width: 453px; height: 4px; margin-right: 6px; background: radial-gradient(circle, #b8b8b8 1px, transparent 1.300px) 0 0 / 5px 4px; }

.category { height: 140px; flex: none; display: flex; flex-direction: column; }
.cols { height: 97px; flex: none; display: flex; padding-left: 4px; border-bottom: 1px solid #a0a0a0; }
.objects { width: 673px; flex: none; }
h4 { height: 23px; text-align: center; font-size: 12px; line-height: 20px; font-weight: 700; letter-spacing: .23px; }
.lists { display: flex; justify-content: space-between; }
.list { width: 220px; height: 69px; }
.list.mid { width: 221px; }
.lh { height: 26px; padding: 5px 10px 0 4px; display: flex; justify-content: space-between; border-right: 1px solid #e0e0e0; margin-right: 1px; }
.tri { border: 5px solid transparent; border-bottom-color: #999; border-top: 0; height: 0; margin-top: 2px; }
.tri.dn { border-top: 5px solid #999; border-bottom: 0; }
.inst { margin-top: 1px; }
.inst span { margin-left: 6px; letter-spacing: .4px; }
.csplit { width: 13px; display: flex; justify-content: center; flex: none; }
.csplit i { width: 4px; height: 30px; margin-top: 32px; background: radial-gradient(circle, #b8b8b8 1px, transparent 1.300px) 0 0 / 4px 5px; }
.props { width: 672px; flex: none; }
.ptable { height: 69px; display: flex; }
.name { width: 335px; margin-right: 0; padding-right: 10px; }
.value { flex: 1; margin-right: 0; }
.ctabs { display: flex; align-items: flex-start; height: 23px; padding-left: 2px; }
.ctab { height: 21px; display: flex; align-items: center; border: 1px solid #d9d9d9; border-width: 0 1px 1px; }
.ctab span { padding-top: 2px; }
.ctab.cur { height: 23px; }
.c1 { width: 141px; padding-left: 4px; gap: 10px; letter-spacing: -.29px; }
.c2 { width: 141px; padding-left: 7px; gap: 11px; }
.status { height: 23px; flex: none; display: flex; justify-content: flex-end; align-items: center; padding: 2px 5px 0 0; letter-spacing: .1px; }

.taskbar { height: 33px; flex: none; background: #101010; display: flex; justify-content: space-between; }
.taskbar svg { display: block; }
.tray { display: flex; align-items: center; color: #fff; }
.clock { margin: 2px 10px 0 12px; width: 47px; letter-spacing: .15px; }
.notif { width: 44px; height: 33px; background: #1c1c1c; }
.peek { width: 1px; height: 33px; background: #555; margin-left: 9px; margin-right: 4px; }
</style>
